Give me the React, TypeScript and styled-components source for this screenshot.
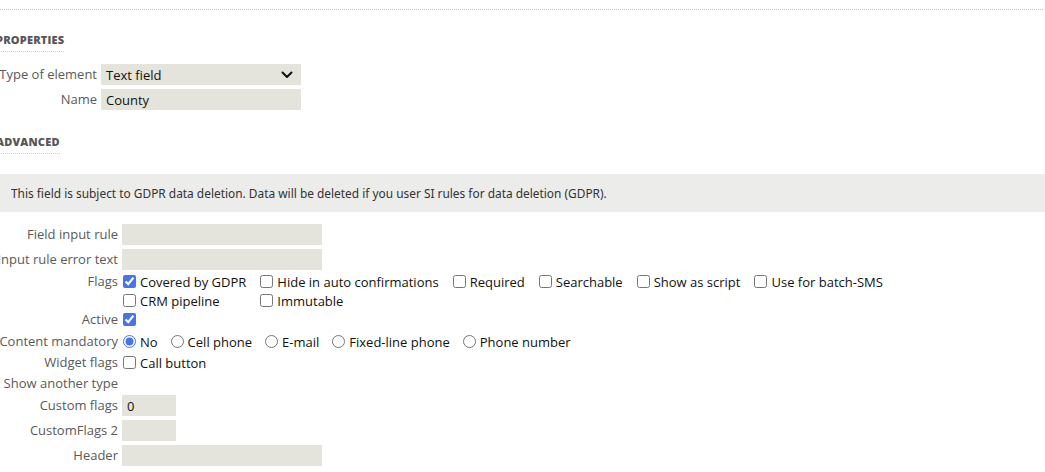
import * as React from 'react';
import styled, { createGlobalStyle } from 'styled-components';

const GlobalStyle = createGlobalStyle`
  html, body {
    margin: 0;
    padding: 0;
    background: #ffffff;
    overflow: hidden;
  }
  body {
    font-family: 'Open Sans', 'Noto Sans', sans-serif;
    font-size: 13px;
    color: #111;
  }
`;

const Page = styled.div`
  padding-top: 9px;
`;

const TopRule = styled.div`
  border-top: 1px dotted #c4c4c4;
  margin-right: 2px;
`;

const Content = styled.div`
  margin-left: -4px;
`;

const SectionTitle = styled.h3<{ $top: number }>`
  display: inline-block;
  margin: ${(p) => p.$top}px 0 0 0;
  padding-bottom: 4px;
  font-family: 'Open Sans', sans-serif;
  font-size: 11px;
  font-weight: 800;
  letter-spacing: 0.2px;
  text-transform: uppercase;
  color: #575757;
  border-bottom: 1px dotted #cfcfcf;
  line-height: 14px;
`;

const Form = styled.div<{ $label: number; $top: number }>`
  --label: ${(p) => p.$label}px;
  margin-top: ${(p) => p.$top}px;
  display: flex;
  flex-direction: column;
`;

const Row = styled.div<{ $h?: number; $mb?: number; $mt?: number }>`
  display: flex;
  align-items: center;
  min-height: ${(p) => p.$h ?? 21}px;
  margin-top: ${(p) => p.$mt ?? 0}px;
  margin-bottom: ${(p) => p.$mb ?? 0}px;
`;

const RowTop = styled(Row)`
  align-items: flex-start;
`;

const Label = styled.div`
  width: var(--label);
  flex: none;
  text-align: right;
  padding-right: 4px;
  box-sizing: border-box;
  color: #5a5a5a;
  white-space: nowrap;
  line-height: 19px;
`;

const TextBox = styled.div<{ $w: number }>`
  width: ${(p) => p.$w}px;
  height: 21px;
  background: #e4e4dc;
  box-sizing: border-box;
  padding: 0 5px;
  display: flex;
  align-items: center;
  color: #111;
  font-size: 13px;
`;

const SelectBox = styled(TextBox)`
  justify-content: space-between;
  padding-right: 8px;
`;

const Banner = styled.div`
  margin: 20px 0 12px 4px;
  height: 38px;
  background: #ececea;
  display: flex;
  align-items: center;
  padding-left: 11px;
  font-family: 'Noto Sans', 'Open Sans', sans-serif;
  font-size: 11.9px;
  color: #333;
`;

const FlagGrid = styled.div`
  display: grid;
  grid-template-columns: repeat(6, auto);
  justify-content: start;
  column-gap: 13px;
`;

const Inline = styled.div`
  display: flex;
  align-items: center;
  gap: 12px;
`;

const Option = styled.label`
  display: flex;
  align-items: center;
  height: 19px;
  white-space: nowrap;
  color: #111;
`;

const Check = styled.input`
  width: 13px;
  height: 13px;
  margin: 0 4px 0 1px;
  accent-color: #4a74e6;
`;

const Chevron = () => (
  <svg width="12" height="8" viewBox="0 0 12 8" fill="none">
    <path d="M1.5 1.5 L6 6 L10.5 1.5" stroke="#111" strokeWidth="2" strokeLinecap="round" strokeLinejoin="round" />
  </svg>
);

const flagsRow1 = ['Covered by GDPR', 'Hide in auto confirmations', 'Required', 'Searchable', 'Show as script', 'Use for batch-SMS'];
const flagsRow2 = ['CRM pipeline', 'Immutable'];
const mandatory = ['No', 'Cell phone', 'E-mail', 'Fixed-line phone', 'Phone number'];

const Flag = ({ text, checked }: { text: string; checked?: boolean }) => (
  <Option>
    <Check type="checkbox" defaultChecked={checked} />
    {text}
  </Option>
);

const App = () => {
  return (
    <Page>
      <GlobalStyle />
      <TopRule />
      <Content>
        <SectionTitle $top={23}>Properties</SectionTitle>
        <Form $label={105} $top={12}>
          <Row $mb={4}>
            <Label>Type of element</Label>
            <SelectBox $w={200}>
              Text field
              <Chevron />
            </SelectBox>
          </Row>
          <Row>
            <Label>Name</Label>
            <TextBox $w={200}>County</TextBox>
          </Row>
        </Form>
        <SectionTitle $top={25}>Advanced</SectionTitle>
        <Banner>
          This field is subject to GDPR data deletion. Data will be deleted if you user SI rules for data deletion (GDPR).
        </Banner>
        <Form $label={126} $top={0}>
          <Row $mb={4}>
            <Label>Field input rule</Label>
            <TextBox $w={200} />
          </Row>
          <Row $mb={2}>
            <Label>Input rule error text</Label>
            <TextBox $w={200} />
          </Row>
          <RowTop>
            <Label>Flags</Label>
            <FlagGrid>
              {flagsRow1.map((f, i) => (
                <Flag key={f} text={f} checked={i === 0} />
              ))}
              {flagsRow2.map((f) => (
                <Flag key={f} text={f} />
              ))}
            </FlagGrid>
          </RowTop>
          <Row $h={19}>
            <Label>Active</Label>
            <Flag text="" checked />
          </Row>
          <Row $h={21} $mt={2}>
            <Label>Content mandatory</Label>
            <Inline>
              {mandatory.map((m, i) => (
                <Option key={m}>
                  <Check type="radio" name="mandatory" defaultChecked={i === 0} />
                  {m}
                </Option>
              ))}
            </Inline>
          </Row>
          <Row $h={21}>
            <Label>Widget flags</Label>
            <Flag text="Call button" />
          </Row>
          <Row $h={21} $mb={1}>
            <Label>Show another type</Label>
          </Row>
          <Row $mb={4}>
            <Label>Custom flags</Label>
            <TextBox $w={54}>0</TextBox>
          </Row>
          <Row $mb={4}>
            <Label>CustomFlags 2</Label>
            <TextBox $w={54} />
          </Row>
          <Row>
            <Label>Header</Label>
            <TextBox $w={200} />
          </Row>
        </Form>
      </Content>
    </Page>
  );
};

export default App;
